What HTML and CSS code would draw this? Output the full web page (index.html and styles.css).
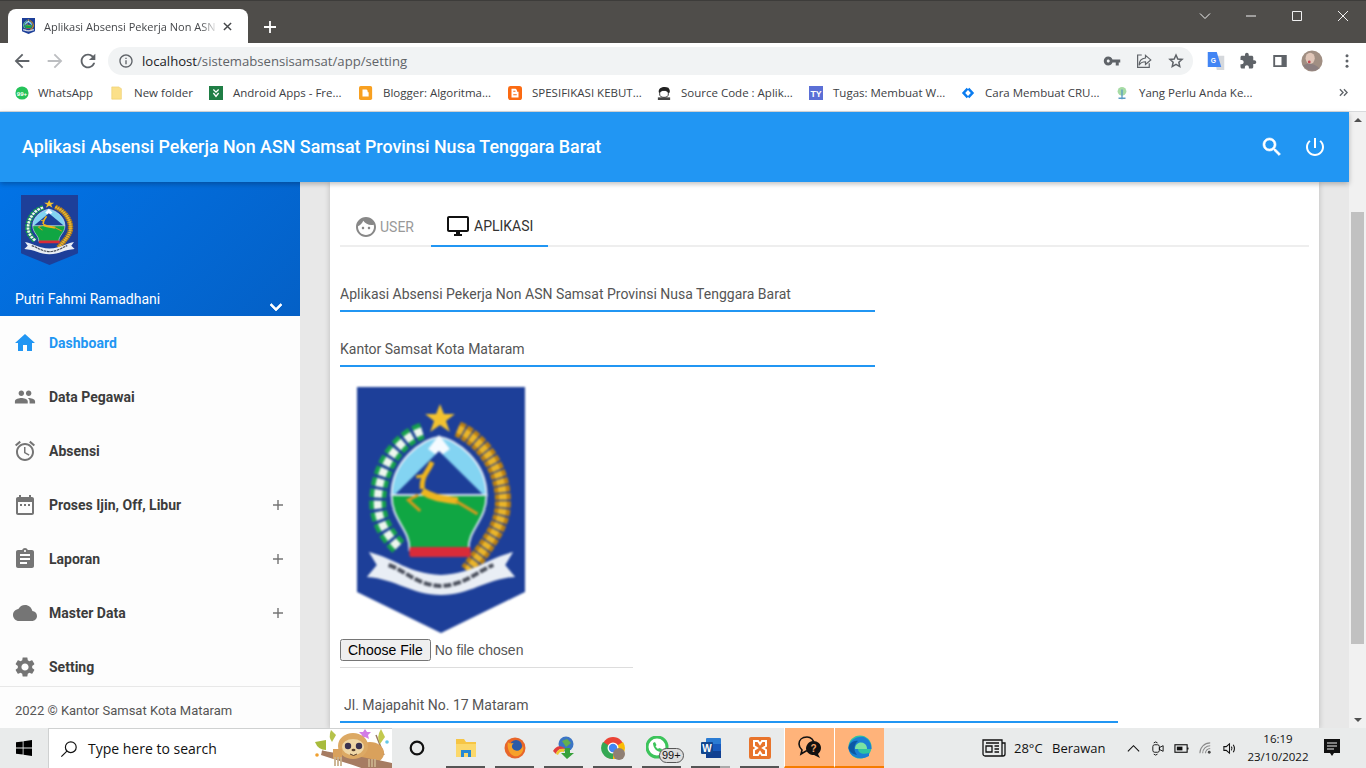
FILE: index.html
```html
<!DOCTYPE html>
<html lang="id">
<head>
<meta charset="utf-8">
<title>Aplikasi Absensi Pekerja Non ASN</title>
<link rel="stylesheet" href="styles.css">
</head>
<body>
<svg class="defs" width="0" height="0" aria-hidden="true">
  <symbol id="emblem" viewBox="0 0 170 246" preserveAspectRatio="none">
    <polygon points="0,0 170,0 170,205 85,246 0,205" fill="#1d3f99"/>
    <polygon points="84,17 88,27 99,27 90,34 94,45 84,38 74,45 78,34 69,27 80,27" fill="#f2c230"/>
    <path d="M66 44C40 52 20 84 21 118C22 134 30 148 42 160" fill="none" stroke="#16a14c" stroke-width="17" stroke-dasharray="8 3"/>
    <path d="M66 44C40 52 20 84 21 118C22 134 30 148 42 160" fill="none" stroke="#eef6ef" stroke-width="8" stroke-dasharray="8 3"/>
    <path d="M102 42C130 54 152 90 147 124C144 142 132 158 112 184" fill="none" stroke="#b97f14" stroke-width="16" stroke-dasharray="6 1.500"/>
    <path d="M102 42C130 54 152 90 147 124C144 142 132 158 112 184" fill="none" stroke="#eab52a" stroke-width="8" stroke-dasharray="6 1.500"/>
    <path d="M83 50C100 52 131 74 131 108H35C35 74 66 52 83 50Z" fill="#83d4f2" stroke="#dfe9f5" stroke-width="2"/>
    <path d="M83 48L72 62L83 70L94 62Z" fill="#f5fbff"/>
    <path d="M83 64L38 108H128Z" fill="#1d3f99"/>
    <path d="M35 108H131C131 134 112 142 113 163H53C54 142 35 134 35 108Z" fill="#10a643" stroke="#d6e2f0" stroke-width="2"/>
    <rect x="53" y="160" width="62" height="10" rx="2" fill="#d92b39"/>
    <path d="M76 75C72 85 65 88 66 102" fill="none" stroke="#eeb51f" stroke-width="5"/>
    <path d="M60 90L70 88" fill="none" stroke="#eeb51f" stroke-width="3"/>
    <path d="M66 104C78 112 90 112 102 114" fill="none" stroke="#eeb51f" stroke-width="7"/>
    <path d="M100 114L122 127M62 108L52 113L64 124" fill="none" stroke="#d99a1c" stroke-width="3"/>
    <path d="M12 165C40 172 50 186 85 188C120 186 130 172 158 165L150 178L160 190C130 192 115 208 85 208C55 208 40 192 10 190L20 178Z" fill="#e9eef5"/>
    <path d="M32 178C50 184 60 198 85 199C110 198 122 184 138 178" fill="none" stroke="#4a4f5c" stroke-width="4" stroke-dasharray="8 2"/>
  </symbol>
</svg>

<div class="chrome">
  <div class="tabstrip">
    <div class="tab">
      <svg class="tab-favicon"><use href="#emblem"/></svg>
      <span class="tab-title">Aplikasi Absensi Pekerja Non ASN</span>
      <svg class="tab-close" viewBox="0 0 10 10"><path d="M1 1L9 9M9 1L1 9"/></svg>
    </div>
    <svg class="newtab" viewBox="0 0 12 12"><path d="M6 0V12M0 6H12"/></svg>
    <div class="winctl">
      <svg viewBox="0 0 12 12"><path d="M1 3.500L6 8.500L11 3.500"/></svg>
      <svg viewBox="0 0 12 12"><path d="M1 6H11"/></svg>
      <svg viewBox="0 0 12 12"><path d="M1.500 1.500H10.500V10.500H1.500Z"/></svg>
      <svg viewBox="0 0 12 12"><path d="M1 1L11 11M11 1L1 11"/></svg>
    </div>
  </div>
  <div class="toolbar">
    <svg class="nav-ic" viewBox="0 0 24 24"><path fill="#5f6368" d="M20 11H7.830l5.590-5.590L12 4l-8 8 8 8 1.410-1.410L7.830 13H20z"/></svg>
    <svg class="nav-ic" viewBox="0 0 24 24"><path fill="#bcbec1" d="M12 4l-1.410 1.410L16.170 11H4v2h12.170l-5.580 5.590L12 20l8-8z"/></svg>
    <svg class="nav-ic" viewBox="0 0 24 24"><path fill="#5f6368" d="M17.650 6.350C16.200 4.900 14.210 4 12 4c-4.420 0-7.990 3.580-7.990 8s3.570 8 7.990 8c3.730 0 6.840-2.550 7.730-6h-2.080c-.82 2.330-3.040 4-5.650 4-3.310 0-6-2.690-6-6s2.690-6 6-6c1.660 0 3.140.69 4.220 1.780L13 11h7V4l-2.350 2.350z"/></svg>
    <div class="omnibox">
      <svg class="info" viewBox="0 0 24 24"><path fill="#5f6368" d="M11 7h2v2h-2zm0 4h2v6h-2zm1-9C6.480 2 2 6.480 2 12s4.480 10 10 10 10-4.480 10-10S17.520 2 12 2zm0 18c-4.410 0-8-3.590-8-8s3.590-8 8-8 8 3.590 8 8-3.590 8-8 8z"/></svg>
      <span class="url"><b>localhost</b>/sistemabsensisamsat/app/setting</span>
      <div class="omni-actions">
        <svg viewBox="0 0 24 24"><path fill="#5f6368" d="M12.650 10C11.830 7.670 9.610 6 7 6c-3.310 0-6 2.690-6 6s2.690 6 6 6c2.610 0 4.830-1.670 5.650-4H17v4h4v-4h2v-4H12.650zM7 14c-1.100 0-2-.9-2-2s.9-2 2-2 2 .9 2 2-.9 2-2 2z"/></svg>
        <svg viewBox="0 0 24 24"><path fill="none" stroke="#5f6368" stroke-width="1.600" d="M14 4.500L21 10.500L14 16.500V13C10 13 7 14.500 5.500 17.500C5.500 12 9 8.500 14 8ZM9 4H3.500V20.500H19V15"/></svg>
        <svg viewBox="0 0 24 24"><path fill="none" stroke="#5f6368" stroke-width="2" d="M12 4l2.400 5.300 5.700.6-4.300 3.800 1.200 5.700L12 16.500l-5 2.900 1.200-5.700-4.300-3.800 5.700-.6z"/></svg>
      </div>
    </div>
    <div class="ext-actions">
      <svg viewBox="0 0 24 24"><path fill="#d5d8dc" d="M10 5H23V24H13Z"/><path fill="#4285f4" d="M1 0H13L19 20H1Z"/><text class="ext-g" x="5" y="14">G</text></svg>
      <svg viewBox="0 0 24 24"><path fill="#5f6368" d="M20.500 11H19V7c0-1.100-.9-2-2-2h-4V3.500C13 2.120 11.880 1 10.500 1S8 2.120 8 3.500V5H4c-1.100 0-1.990.9-1.990 2v3.800H3.500c1.490 0 2.700 1.210 2.700 2.700s-1.210 2.700-2.700 2.700H2V20c0 1.100.9 2 2 2h3.800v-1.500c0-1.490 1.210-2.700 2.700-2.700 1.490 0 2.700 1.210 2.700 2.700V22H17c1.100 0 2-.9 2-2v-4h1.500c1.380 0 2.500-1.120 2.500-2.500S21.880 11 20.500 11z"/></svg>
      <svg viewBox="0 0 24 24"><path fill="#5f6368" fill-rule="evenodd" d="M3 4H21V20H3ZM5.500 6.500V17.500H14V6.500Z"/></svg>
      <svg viewBox="0 0 24 24"><circle cx="12" cy="12" r="11.500" fill="#a18f83"/><ellipse cx="10" cy="9" rx="5" ry="6" fill="#e0c6b8"/><path d="M2 17C7 14 14 14 20 20C16 24 7 24 2 17Z" fill="#8c7f80"/><circle cx="9" cy="13" r="1.500" fill="#c2444f"/></svg>
      <svg viewBox="0 0 24 24"><circle cx="12" cy="5" r="2" fill="#5f6368"/><circle cx="12" cy="12" r="2" fill="#5f6368"/><circle cx="12" cy="19" r="2" fill="#5f6368"/></svg>
    </div>
  </div>
  <div class="bookmarks">
    <div class="bm"><svg viewBox="0 0 16 16"><circle cx="8" cy="8" r="7.500" fill="#25c35a"/><text class="bm-badge" x="8" y="11">99+</text></svg><span>WhatsApp</span></div>
    <div class="bm"><svg viewBox="0 0 16 16"><path d="M2 1H10L13 3V15H2Z" fill="#fbe08a" stroke="#e9c75f" stroke-width=".6"/></svg><span>New folder</span></div>
    <div class="bm"><svg viewBox="0 0 16 16"><rect width="16" height="16" fill="#1f7e45"/><path d="M5 4L8 7L11 4M5 8L8 12L11 8" fill="none" stroke="#fff" stroke-width="1.500"/></svg><span>Android Apps - Fre...</span></div>
    <div class="bm"><svg viewBox="0 0 16 16"><rect width="15" height="16" rx="2" fill="#f8a020"/><path d="M4 4H8.500C10 4 10 7 10 7H11V12H4Z" fill="#fff"/></svg><span>Blogger: Algoritma...</span></div>
    <div class="bm"><svg viewBox="0 0 16 16"><rect width="16" height="16" rx="3" fill="#fb6a12"/><path d="M4 3H8.500C10 3 10.500 6 10.500 6.500H12V13H4Z" fill="#fff"/><path d="M6 6H8.500M6 10H10" stroke="#fb6a12" stroke-width="1.400"/></svg><span>SPESIFIKASI KEBUT...</span></div>
    <div class="bm"><svg viewBox="0 0 16 16"><path d="M2 7C1 2 8 0 13 2C15 4 15 7 14 8L3 8Z" fill="#222"/><ellipse cx="8" cy="9" rx="5" ry="4" fill="#fff" stroke="#222"/><rect x="1" y="13" width="14" height="3" fill="#444"/></svg><span>Source Code : Aplik...</span></div>
    <div class="bm"><svg viewBox="0 0 16 16"><rect width="16" height="16" fill="#5b6fd6"/><text class="bm-ty" x="8" y="13">TY</text></svg><span>Tugas: Membuat W...</span></div>
    <div class="bm"><svg viewBox="0 0 16 16"><path d="M6.500 2L1 8L6.500 14L8.500 12L4.800 8L8.500 4Z" fill="#0a7cf0"/><path d="M9.500 2L15 8L9.500 14L7.500 12L11.200 8L7.500 4Z" fill="#0a7cf0"/></svg><span>Cara Membuat CRU...</span></div>
    <div class="bm"><svg viewBox="0 0 16 16"><circle cx="8" cy="6" r="5" fill="#a7dca5"/><path d="M8 4V15M4 14H12" stroke="#5a9bc4" stroke-width="1.500"/></svg><span>Yang Perlu Anda Ke...</span></div>
    <svg class="bm-more" viewBox="0 0 10 10"><path d="M1 1.500L4.500 5L1 8.500M5.500 1.500L9 5L5.500 8.500"/></svg>
  </div>
</div>

<div class="viewport">
  <div class="app">
    <header class="appbar">
      <h1>Aplikasi Absensi Pekerja Non ASN Samsat Provinsi Nusa Tenggara Barat</h1>
      <div class="appbar-actions">
        <svg class="bold" viewBox="0 0 24 24"><path d="M15.500 14h-.79l-.28-.27C15.410 12.590 16 11.110 16 9.500 16 5.910 13.090 3 9.500 3S3 5.910 3 9.500 5.910 16 9.500 16c1.610 0 3.090-.59 4.230-1.570l.27.28v.79l5 4.990L20.490 19l-4.990-5zm-6 0C7.010 14 5 11.990 5 9.500S7.010 5 9.500 5 14 7.010 14 9.500 11.990 14 9.500 14z"/></svg>
        <svg viewBox="0 0 24 24"><path d="M13 3h-2v10h2V3zm4.830 2.170l-1.420 1.420C17.990 7.860 19 9.810 19 12c0 3.870-3.130 7-7 7s-7-3.130-7-7c0-2.190 1.010-4.140 2.580-5.420L6.170 5.170C4.230 6.820 3 9.260 3 12c0 4.970 4.030 9 9 9s9-4.030 9-9c0-2.740-1.230-5.180-3.170-6.830z"/></svg>
      </div>
    </header>
    <div class="main">
      <aside class="sidebar">
        <div class="profile">
          <svg class="profile-logo"><use href="#emblem"/></svg>
          <div class="profile-row">
            <span>Putri Fahmi Ramadhani</span>
            <svg viewBox="0 0 24 24"><path d="M16.590 8.590L12 13.170 7.410 8.590 6 10l6 6 6-6z"/></svg>
          </div>
        </div>
        <nav class="menu">
          <a class="item active"><svg viewBox="0 0 24 24"><path d="M10 20v-6h4v6h5v-8h3L12 3 2 12h3v8z"/></svg><span>Dashboard</span></a>
          <a class="item"><svg class="narrow" viewBox="0 0 24 24"><path d="M16 11c1.660 0 2.990-1.340 2.990-3S17.660 5 16 5c-1.660 0-3 1.340-3 3s1.340 3 3 3zm-8 0c1.660 0 2.990-1.340 2.990-3S9.660 5 8 5C6.340 5 5 6.340 5 8s1.340 3 3 3zm0 2c-2.330 0-7 1.170-7 3.500V19h14v-2.500c0-2.330-4.670-3.500-7-3.500zm8 0c-.29 0-.62.02-.97.05 1.160.84 1.970 1.970 1.970 3.450V19h6v-2.500c0-2.330-4.670-3.500-7-3.500z"/></svg><span>Data Pegawai</span></a>
          <a class="item"><svg viewBox="0 0 24 24"><path d="M22 5.720l-4.600-3.860-1.290 1.530 4.600 3.860L22 5.720zM7.880 3.390L6.600 1.860 2 5.710l1.290 1.530 4.590-3.850zM12.500 8H11v6l4.750 2.850.75-1.230-4-2.370V8zM12 4c-4.970 0-9 4.030-9 9s4.020 9 9 9c4.970 0 9-4.030 9-9s-4.030-9-9-9zm0 16c-3.870 0-7-3.130-7-7s3.130-7 7-7 7 3.130 7 7-3.130 7-7 7z"/></svg><span>Absensi</span></a>
          <a class="item"><svg viewBox="0 0 24 24"><path d="M9 11H7v2h2v-2zm4 0h-2v2h2v-2zm4 0h-2v2h2v-2zm2-7h-1V2h-2v2H8V2H6v2H5c-1.110 0-1.990.9-1.990 2L3 20c0 1.100.89 2 2 2h14c1.100 0 2-.9 2-2V6c0-1.100-.9-2-2-2zm0 16H5V9h14v11z"/></svg><span>Proses Ijin, Off, Libur</span><svg class="plus" viewBox="5 5 14 14"><path d="M19 13h-6v6h-2v-6H5v-2h6V5h2v6h6v2z"/></svg></a>
          <a class="item"><svg viewBox="0 0 24 24"><path d="M19 3h-4.180C14.400 1.840 13.300 1 12 1c-1.300 0-2.400.84-2.820 2H5c-1.100 0-2 .9-2 2v14c0 1.100.9 2 2 2h14c1.100 0 2-.9 2-2V5c0-1.100-.9-2-2-2zm-7 0c.55 0 1 .45 1 1s-.45 1-1 1-1-.45-1-1 .45-1 1-1zm2 14H7v-2h7v2zm3-4H7v-2h10v2zm0-4H7V7h10v2z"/></svg><span>Laporan</span><svg class="plus" viewBox="5 5 14 14"><path d="M19 13h-6v6h-2v-6H5v-2h6V5h2v6h6v2z"/></svg></a>
          <a class="item"><svg viewBox="0 0 24 24"><path d="M19.350 10.040C18.670 6.590 15.640 4 12 4 9.110 4 6.600 5.640 5.350 8.040 2.340 8.360 0 10.910 0 14c0 3.310 2.690 6 6 6h13c2.760 0 5-2.240 5-5 0-2.640-2.050-4.780-4.650-4.960z"/></svg><span>Master Data</span><svg class="plus" viewBox="5 5 14 14"><path d="M19 13h-6v6h-2v-6H5v-2h6V5h2v6h6v2z"/></svg></a>
          <a class="item"><svg viewBox="0 0 24 24"><path d="M19.140 12.940c.04-.3.06-.61.06-.94 0-.32-.02-.64-.07-.94l2.030-1.580c.18-.14.23-.41.12-.61l-1.920-3.320c-.12-.22-.37-.29-.59-.22l-2.390.96c-.5-.38-1.030-.7-1.620-.94l-.36-2.540c-.04-.24-.24-.41-.48-.41h-3.840c-.24 0-.43.17-.47.41l-.36 2.540c-.59.24-1.130.57-1.620.94l-2.390-.96c-.22-.08-.47 0-.59.22L2.740 8.870c-.12.21-.08.47.12.61l2.030 1.580c-.05.3-.09.63-.09.94s.02.64.07.94l-2.030 1.580c-.18.14-.23.41-.12.61l1.920 3.320c.12.22.37.29.59.22l2.390-.96c.5.38 1.030.7 1.620.94l.36 2.540c.05.24.24.41.48.41h3.840c.24 0 .44-.17.47-.41l.36-2.540c.59-.24 1.130-.56 1.620-.94l2.390.96c.22.08.47 0 .59-.22l1.920-3.320c.12-.22.07-.47-.12-.61l-2.010-1.580zM12 15.600c-1.980 0-3.600-1.620-3.600-3.600s1.620-3.600 3.600-3.600 3.600 1.620 3.600 3.600-1.620 3.600-3.600 3.600z"/></svg><span>Setting</span></a>
        </nav>
        <footer class="side-foot">2022 © Kantor Samsat Kota Mataram</footer>
      </aside>
      <section class="content">
        <div class="card">
          <div class="tabs">
            <div class="tabbtn"><svg viewBox="0 0 24 24"><path d="M9 11.750c-.69 0-1.250.56-1.250 1.250s.56 1.250 1.250 1.250 1.250-.56 1.250-1.250-.56-1.250-1.250-1.250zm6 0c-.69 0-1.250.56-1.250 1.250s.56 1.250 1.250 1.250 1.250-.56 1.250-1.250-.56-1.250-1.250-1.250zM12 2C6.480 2 2 6.480 2 12s4.480 10 10 10 10-4.480 10-10S17.520 2 12 2zm0 18c-4.410 0-8-3.590-8-8 0-.29.02-.58.05-.86 2.360-1.050 4.230-2.980 5.210-5.370C11.070 8.330 14.050 10 17.420 10c.78 0 1.530-.09 2.250-.26.21.71.33 1.470.33 2.260 0 4.410-3.590 8-8 8z"/></svg>USER</div>
            <div class="tabbtn on"><svg viewBox="0 0 24 24"><path d="M21 2H3c-1.100 0-2 .9-2 2v12c0 1.100.9 2 2 2h7v2H8v2h8v-2h-2v-2h7c1.100 0 2-.9 2-2V4c0-1.100-.9-2-2-2zm0 14H3V4h18v12z"/></svg>APLIKASI</div>
          </div>
          <input class="field first" type="text" value="Aplikasi Absensi Pekerja Non ASN Samsat Provinsi Nusa Tenggara Barat">
          <input class="field" type="text" value="Kantor Samsat Kota Mataram">
          <svg class="logo-big"><use href="#emblem"/></svg>
          <div class="filewrap"><input class="file" type="file"></div>
          <input class="field wide" type="text" value="Jl. Majapahit No. 17 Mataram">
        </div>
      </section>
    </div>
  </div>
  <div class="scrollbar">
    <div class="arrow up"></div>
    <div class="track"><div class="thumb"></div></div>
    <div class="arrow down"></div>
  </div>
</div>

<div class="taskbar">
  <div class="start"><svg viewBox="0 0 16 16"><path d="M0 2.300L6.700 1.400V7.600H0ZM7.500 1.300L16 0V7.600H7.500ZM0 8.400H6.700V14.600L0 13.700ZM7.500 8.400H16V16L7.500 14.700Z"/></svg></div>
  <div class="search">
    <svg class="lens" viewBox="0 0 20 20"><circle cx="12" cy="8" r="6"/><path d="M7.700 12.300L1.500 18.500"/></svg>
    <span>Type here to search</span>
    <svg class="sloth" viewBox="0 0 78 40">
      <path d="M8 22L26 28M62 6L70 26" stroke="#9a7a62" stroke-width="1.500"/>
      <path d="M1 13L12 11L12 21Q4 21 1 13Z" fill="#a8bb3c"/><path d="M17 1L22 6L18 13Q14 8 17 1Z" fill="#b5c24a"/><path d="M67 0L71 8L66 15Q62 8 67 0Z" fill="#c3c94e"/>
      <path d="M51 0L53 3L57 3L54 6L55 10L51 8L47 10L48 6L45 3L49 3Z" fill="#d27ce6"/><circle cx="73" cy="13" r="1.800" fill="#63c8e8"/><circle cx="3" cy="26" r="1.800" fill="#f0a030"/>
      <ellipse cx="56" cy="24" rx="14" ry="11" fill="#d9a15c"/>
      <path d="M8 22C24 24 50 28 78 34V40H50C34 34 18 30 7 26Z" fill="#a67c62"/>
      <ellipse cx="39" cy="17" rx="15" ry="13" fill="#dca964"/>
      <ellipse cx="39" cy="18" rx="11" ry="8" fill="#efd7a6"/>
      <circle cx="34" cy="17" r="3.200" fill="#3a3350"/><circle cx="45" cy="17" r="3.200" fill="#3a3350"/><ellipse cx="39.500" cy="21" rx="2" ry="1.300" fill="#59402e"/>
      <path d="M36 25Q39.500 28 43 25" fill="none" stroke="#59402e" stroke-width="1"/>
      <path d="M19 20H28V30H19Z" fill="#d9a15c"/><path d="M21 28V37M24 28V37M27 28V37M55 30V38M58 30V38M61 30V38" stroke="#c9b08c" stroke-width="1.800"/>
    </svg>
  </div>
  <div class="tb"><svg viewBox="0 0 24 24"><circle cx="12" cy="12" r="6.300" fill="none" stroke="#111" stroke-width="2.200"/></svg></div>
  <div class="tb open"><svg viewBox="0 0 24 24"><path d="M2 3H10L12 6H22V21H2Z" fill="#f6c544"/><path d="M2 8H22V21H2Z" fill="#fbd86b"/><rect x="7" y="14" width="10" height="7" fill="#2688d4"/><rect x="10" y="17" width="4" height="4" fill="#fbd86b"/></svg></div>
  <div class="tb open"><svg viewBox="0 0 24 24"><circle cx="12" cy="12" r="10.500" fill="#e8662a"/><circle cx="13" cy="10" r="6" fill="#2b5aa8"/><path d="M5 6C3 14 9 22 15 20C20 18 21 13 20 10C18 15 13 16 10 13C8 11 9 8 11 7C8 7 6 8 5 6Z" fill="#f7a128"/></svg></div>
  <div class="tb open"><svg viewBox="0 0 24 24"><circle cx="14" cy="8" r="7.500" fill="#3b75c4"/><path d="M10 5L15 3L19 7L14 11Z" fill="#64b04e"/><path d="M1 15C4 9 10 9 13 13C8 12 5 14 4 18Z" fill="#e23d3d"/><path d="M4 18C5 14 8 12 13 13L12 16C9 15 7 16 6 19Z" fill="#f0c830"/><path d="M13 12H18V17H22L15 23L9 17H13Z" fill="#37a13b"/></svg></div>
  <div class="tb open"><svg viewBox="0 0 24 24"><circle cx="12" cy="12" r="11" fill="#ea4335"/><path d="M12 12L22 6A11 11 0 0 1 12 23Z" fill="#fbbc05"/><path d="M12 12L12 23A11 11 0 0 1 2 6Z" fill="#34a853"/><circle cx="12" cy="12" r="5.500" fill="#fff"/><circle cx="12" cy="12" r="4.200" fill="#4285f4"/><circle cx="18" cy="18" r="6" fill="#8f7f74"/></svg></div>
  <div class="tb open wa"><svg viewBox="0 0 24 24"><circle cx="11" cy="11" r="10" fill="#fff" stroke="#3cc45b" stroke-width="3"/><path d="M7 7C7 12 11 16 15 16L16 13L13 12L12 13L9.500 10.500L10.500 9L9 6Z" fill="#3cc45b"/></svg><span class="wa-badge">99+</span></div>
  <div class="tb open half"><svg viewBox="0 0 24 24"><rect x="7" y="2" width="15" height="20" rx="1" fill="#2b7cd3"/><rect x="7" y="8" width="15" height="7" fill="#185abd"/><rect x="7" y="15" width="15" height="7" fill="#103f91"/><rect x="2" y="6" width="12" height="12" rx="1" fill="#11468f"/><text class="word-w" x="8" y="15.500">W</text></svg></div>
  <div class="tb open"><svg viewBox="0 0 24 24"><rect x="1" y="1" width="22" height="22" rx="2" fill="#e8742c"/><path d="M6 5H10L12 8L14 5H18V10L15 12L18 14V19H14L12 16L10 19H6V14L9 12L6 10Z" fill="none" stroke="#fff" stroke-width="2"/></svg></div>
  <div class="tb hot"><svg viewBox="0 0 24 24"><path d="M9 2C4 2 1 5 1 9C1 12 3 14 4 15L3 19L8 16C12 16 16 13 16 9C16 5 13 2 9 2Z" fill="none" stroke="#111" stroke-width="1.600"/><path d="M15 6C20 6 23 9 23 13C23 16 21 18 20 19L22 23L16 20C12 20 9 18 8 14C8 10 11 6 15 6Z" fill="#111"/><text class="chat-q" x="15.500" y="17">?</text></svg></div>
  <div class="tb hot"><svg viewBox="0 0 24 24"><circle cx="12" cy="12" r="11.500" fill="#2ec4a0"/><path d="M.5 13C1 5 9 .5 16 2C21 4 23.500 9 23.500 14H10C10 18 15 20 21 18V21C12 26 1 22 .5 13Z" fill="#1b7fd4"/><path d="M7 14C7 8 13 6 17 9C18.500 10 19 12 19 14Z" fill="#7be3a2"/><path d="M.5 13C1 8 6 5 10 6C6 9 5 15 9 20C4 19 1 16 .5 13Z" fill="#0c59a4"/></svg></div>
  <div class="tray">
    <svg class="tray-news" viewBox="0 0 24 18"><path d="M1 1H20V17H3C2 17 1 16 1 15ZM20 4H23V15C23 16 22 17 21 17H20M4 4H17M4 7H10V13H4ZM12.500 7H17M12.500 10H17M12.500 13H17" fill="none" stroke="#111" stroke-width="1.300"/></svg>
    <span class="temp">28°C</span>
    <span class="weather">Berawan</span>
    <div class="tray-icons">
      <svg viewBox="0 0 16 16"><path d="M2 11L8 5L14 11" fill="none" stroke="#111" stroke-width="1.200"/></svg>
      <svg viewBox="0 0 16 16"><rect x="3" y="4" width="7" height="8" rx="2" fill="none" stroke="#111"/><path d="M10 7L14 5V11L10 9ZM4 2Q6 0 8 2M4 14Q6 16 8 14" fill="none" stroke="#111"/></svg>
      <svg viewBox="0 0 16 16"><rect x="1" y="4" width="13" height="8" fill="none" stroke="#111" stroke-width="1.200"/><rect x="3" y="6" width="6" height="4" fill="#111"/><rect x="14" y="7" width="1.500" height="2" fill="#111"/></svg>
      <svg viewBox="0 0 16 16"><path d="M2 13A11 11 0 0 1 13 2M5 13A8 8 0 0 1 13 5M8 13A5 5 0 0 1 13 8" fill="none" stroke="#8a8a8a" stroke-width="1.100"/><circle cx="12" cy="12" r="1.500" fill="#444"/></svg>
      <svg viewBox="0 0 16 16"><path d="M2 6H4.500L8 3V13L4.500 10H2ZM10 6Q11.500 8 10 10M12 4Q14.500 8 12 12" fill="none" stroke="#111" stroke-width="1.100"/></svg>
    </div>
    <div class="clock"><span>16:19</span><span>23/10/2022</span></div>
    <svg class="notif" viewBox="0 0 16 18"><path d="M0 0H16V14H10L8 17L6 14H0Z" fill="#111"/><path d="M3 4H13M3 7H13M3 10H10" stroke="#eee" stroke-width="1"/></svg>
  </div>
</div>
</body>
</html>
```

FILE: styles.css
```css
* { box-sizing: border-box; }
html, body { margin: 0; height: 768px; overflow: hidden; }
body { display: flex; flex-direction: column; width: 1366px; font-family: Roboto, sans-serif; background: #e8e8e8; }
.defs { position: absolute; }
svg { display: block; flex: none; }

/* browser chrome */
.chrome { height: 112px; flex: none; font-family: "Open Sans", sans-serif; color: #3c4043; background: #fff; }
.tabstrip { height: 43px; background: #4f4d4a; border-top: 1px solid #3d3c3a; display: flex; align-items: flex-end; padding-left: 8px; }
.tab { width: 240px; height: 34px; background: #fff; border-radius: 8px 8px 0 0; display: flex; align-items: center; padding-left: 14px; }
.tab-favicon { width: 13px; height: 16px; margin-right: 9px; }
.tab-title { width: 174px; font-size: 11px; white-space: nowrap; color: #45474a; -webkit-mask-image: linear-gradient(90deg, #000 90%, transparent 100%); mask-image: linear-gradient(90deg, #000 90%, transparent 100%); }
.tab-close { width: 9px; height: 9px; margin-left: 5px; fill: none; stroke: #45474a; stroke-width: 1.600; }
.newtab { width: 12px; height: 12px; margin: 0 0 10px 16px; fill: none; stroke: #fff; stroke-width: 1.800; }
.winctl { margin-left: auto; align-self: flex-start; height: 30px; display: flex; align-items: center; gap: 34px; padding-right: 17px; }
.winctl svg { width: 12px; height: 12px; fill: none; stroke: #f1f1f1; stroke-width: 1; }
.toolbar { height: 38px; display: flex; align-items: center; padding: 0 0 2px 11px; }
.nav-ic { width: 22px; height: 22px; margin-right: 11px; }
.nav-ic:nth-child(3) { margin-right: 9px; }
.omnibox { width: 1085px; height: 28px; border-radius: 14px; background: #f1f3f4; display: flex; align-items: center; padding-left: 10px; font-size: 13.150px; }
.info { width: 16px; height: 16px; margin-right: 8px; }
.url { color: #5f6368; white-space: nowrap; }
.url b { font-weight: 400; color: #202124; }
.omni-actions { margin-left: auto; display: flex; gap: 14px; padding-right: 8px; }
.omni-actions svg { width: 18px; height: 18px; }
.ext-actions { display: flex; align-items: center; margin-left: 14px; gap: 14px; }
.ext-actions svg { width: 18px; height: 20px; }
.ext-actions svg:nth-child(4) { width: 22px; height: 22px; margin: 0 -2px; }
.ext-actions svg:nth-child(5) { margin-left: 3px; }
.ext-g { font: 700 9px "Liberation Sans", sans-serif; fill: #fff; }
.bookmarks { height: 31px; display: grid; grid-template-columns: 95px 99px 150px 149px 149px 152px 152px 154px 224px 14px; padding: 0 0 7px 15px; align-items: center; border-bottom: 1px solid #d8dadc; }
.bm { display: flex; align-items: center; gap: 10px; font-size: 11.500px; white-space: nowrap; color: #3c4043; }
.bm:first-child { gap: 9px; }
.bm svg { width: 14px; height: 14px; }
.bm-badge { font: 700 7px "Liberation Sans", sans-serif; fill: #fff; text-anchor: middle; }
.bm-ty { font: 700 10px "Liberation Sans", sans-serif; fill: #fff; text-anchor: middle; }
.bm-more { width: 9px; height: 9px; fill: none; stroke: #5f6368; stroke-width: 1.500; }

/* page */
.viewport { flex: 1; min-height: 0; display: flex; }
.app { flex: 1; min-width: 0; display: flex; flex-direction: column; }
.appbar { height: 70px; flex: none; background: #2196f3; display: flex; align-items: center; padding: 0 22px; box-shadow: 0 2px 5px rgba(0,0,0,.26); position: relative; z-index: 2; color: #fff; }
.appbar h1 { margin: 0 0 2px; font-size: 17.850px; font-weight: 500; white-space: nowrap; }
.appbar-actions { margin-left: auto; display: flex; gap: 19px; }
.appbar-actions svg { width: 24px; height: 24px; fill: #fff; }
.appbar-actions svg.bold { stroke: #fff; stroke-width: .6; }
.main { flex: 1; min-height: 0; display: flex; }
.sidebar { width: 300px; flex: none; display: flex; flex-direction: column; background: #fdfdfd; }
.profile { height: 134px; flex: none; padding: 13px 12px 0 21px; background: linear-gradient(135deg, #0273e6, #0460c6); display: flex; flex-direction: column; color: #fff; }
.profile-logo { width: 57px; height: 70px; }
.profile-row { margin: auto 0 9px -6px; display: flex; align-items: center; justify-content: space-between; font-size: 14px; }
.profile-row svg { width: 24px; height: 24px; fill: #fff; margin-bottom: -16px; stroke: #fff; stroke-width: .7; }
.menu { flex: 1; min-height: 0; overflow: hidden; }
.item { height: 54px; display: flex; align-items: center; padding: 0 17px 0 13px; gap: 12px; font-size: 14px; font-weight: 700; color: #3c3c3c; }
.item svg { width: 24px; height: 24px; fill: #757575; }
.item svg.narrow { width: 22px; margin: 0 1px; }
.item.active { color: #2196f3; }
.item.active svg { fill: #2196f3; }
.item svg.plus { width: 10px; height: 10px; margin-left: auto; }
.side-foot { height: 42px; flex: none; border-top: 1px solid #e8e8e8; padding: 16px 0 0 15px; font-size: 13px; color: #555; white-space: nowrap; }
.content { flex: 1; min-width: 0; padding: 0 30px; overflow: hidden; }
.card { width: 989px; height: 100%; background: #fff; padding: 23px 10px 0; box-shadow: 0 1px 6px rgba(0,0,0,.2); overflow: hidden; }
.tabs { height: 42px; border-bottom: 2px solid #eee; display: flex; }
.tabbtn { height: 42px; display: flex; align-items: center; gap: 2px; font-size: 14px; color: #999; padding: 2px 0 0 14px; width: 91px; }
.tabbtn svg { width: 24px; height: 24px; fill: #888; }
.tabbtn.on { color: #333; width: 117px; gap: 4px; border-bottom: 2px solid #2196f3; padding: 2px 0 0 15px; }
.tabbtn.on svg { fill: #111; }
.field { display: block; width: 535px; height: 34px; margin-top: 21px; border: 0; border-bottom: 2px solid #2196f3; outline: 0; padding: 0; background: transparent; font: 14px Roboto, sans-serif; color: #555; }
.field.first { margin-top: 31px; }
.field.wide { width: 778px; padding-left: 4px; margin-top: 21px; }
.logo-big { width: 168px; height: 246px; margin: 20px 0 0 17px; filter: blur(1.200px); }
.filewrap { width: 293px; margin-top: 6px; padding-bottom: 6px; border-bottom: 1px solid #ddd; }
.file { display: block; font: 14px "Liberation Sans", sans-serif; color: #555; }
.scrollbar { width: 17px; flex: none; background: #f1f1f1; display: flex; flex-direction: column; align-items: center; }
.arrow { width: 0; height: 0; flex: none; border-left: 4px solid transparent; border-right: 4px solid transparent; }
.arrow.up { border-bottom: 4px solid #505050; margin: 6px 0 7px; }
.arrow.down { border-top: 4px solid #505050; margin: 7px 0 6px; }
.track { flex: 1; width: 100%; padding: 0 2px; }
.thumb { height: 432px; margin-top: 83px; background: #c1c1c1; }

/* taskbar */
.taskbar { height: 40px; flex: none; display: flex; background: #e9ebeb; font-family: "Open Sans", sans-serif; color: #111; }
.start { width: 48px; display: flex; align-items: center; justify-content: center; }
.start svg { width: 16px; height: 16px; fill: #000; }
.search { width: 344px; background: #fff; border: 1px solid #cfd1d1; border-bottom: 0; border-right: 0; display: flex; align-items: center; padding-left: 11px; font-size: 14px; }
.lens { width: 18px; height: 18px; fill: none; stroke: #111; stroke-width: 1.300; margin-right: 10px; }
.sloth { width: 78px; height: 40px; margin-left: auto; }
.tb { width: 49px; display: flex; align-items: center; justify-content: center; position: relative; }
.tb svg { width: 24px; height: 24px; }
.tb.open::after { content: ""; position: absolute; left: 5px; right: 5px; bottom: 0; height: 2px; background: #555; }
.tb.half::after { background: linear-gradient(90deg, #555 75%, #aaa 75%); }
.tb.hot { background: #ffb37a; border-left: 1px solid #fff; border-bottom: 2px solid #f57c00; width: 50px; }
.tb.hot:last-of-type { width: 48px; }
.wa svg { margin-left: -8px; }
.wa-badge { position: absolute; left: 22px; bottom: 5px; font: 11px "Liberation Sans", sans-serif; background: #ddd; border: 1px solid #555; border-radius: 8px; padding: 0 2px; line-height: 13px; }
.word-w { font: 700 10px "Liberation Sans", sans-serif; fill: #fff; text-anchor: middle; }
.chat-q { font: 700 10px "Liberation Sans", sans-serif; fill: #f3a76c; text-anchor: middle; }
.tray { flex: 1; display: flex; align-items: center; padding-left: 98px; font-size: 13px; }
.tray-news { width: 24px; height: 18px; margin-right: 8px; }
.temp { width: 38px; white-space: nowrap; }
.weather { width: 74px; white-space: nowrap; }
.tray-icons { display: flex; gap: 9px; }
.tray-icons svg { width: 15px; height: 15px; }
.clock { width: 74px; margin-left: 4px; display: flex; flex-direction: column; align-items: center; font-size: 11.500px; line-height: 18px; }
.notif { width: 16px; height: 18px; margin-left: 9px; }
```
